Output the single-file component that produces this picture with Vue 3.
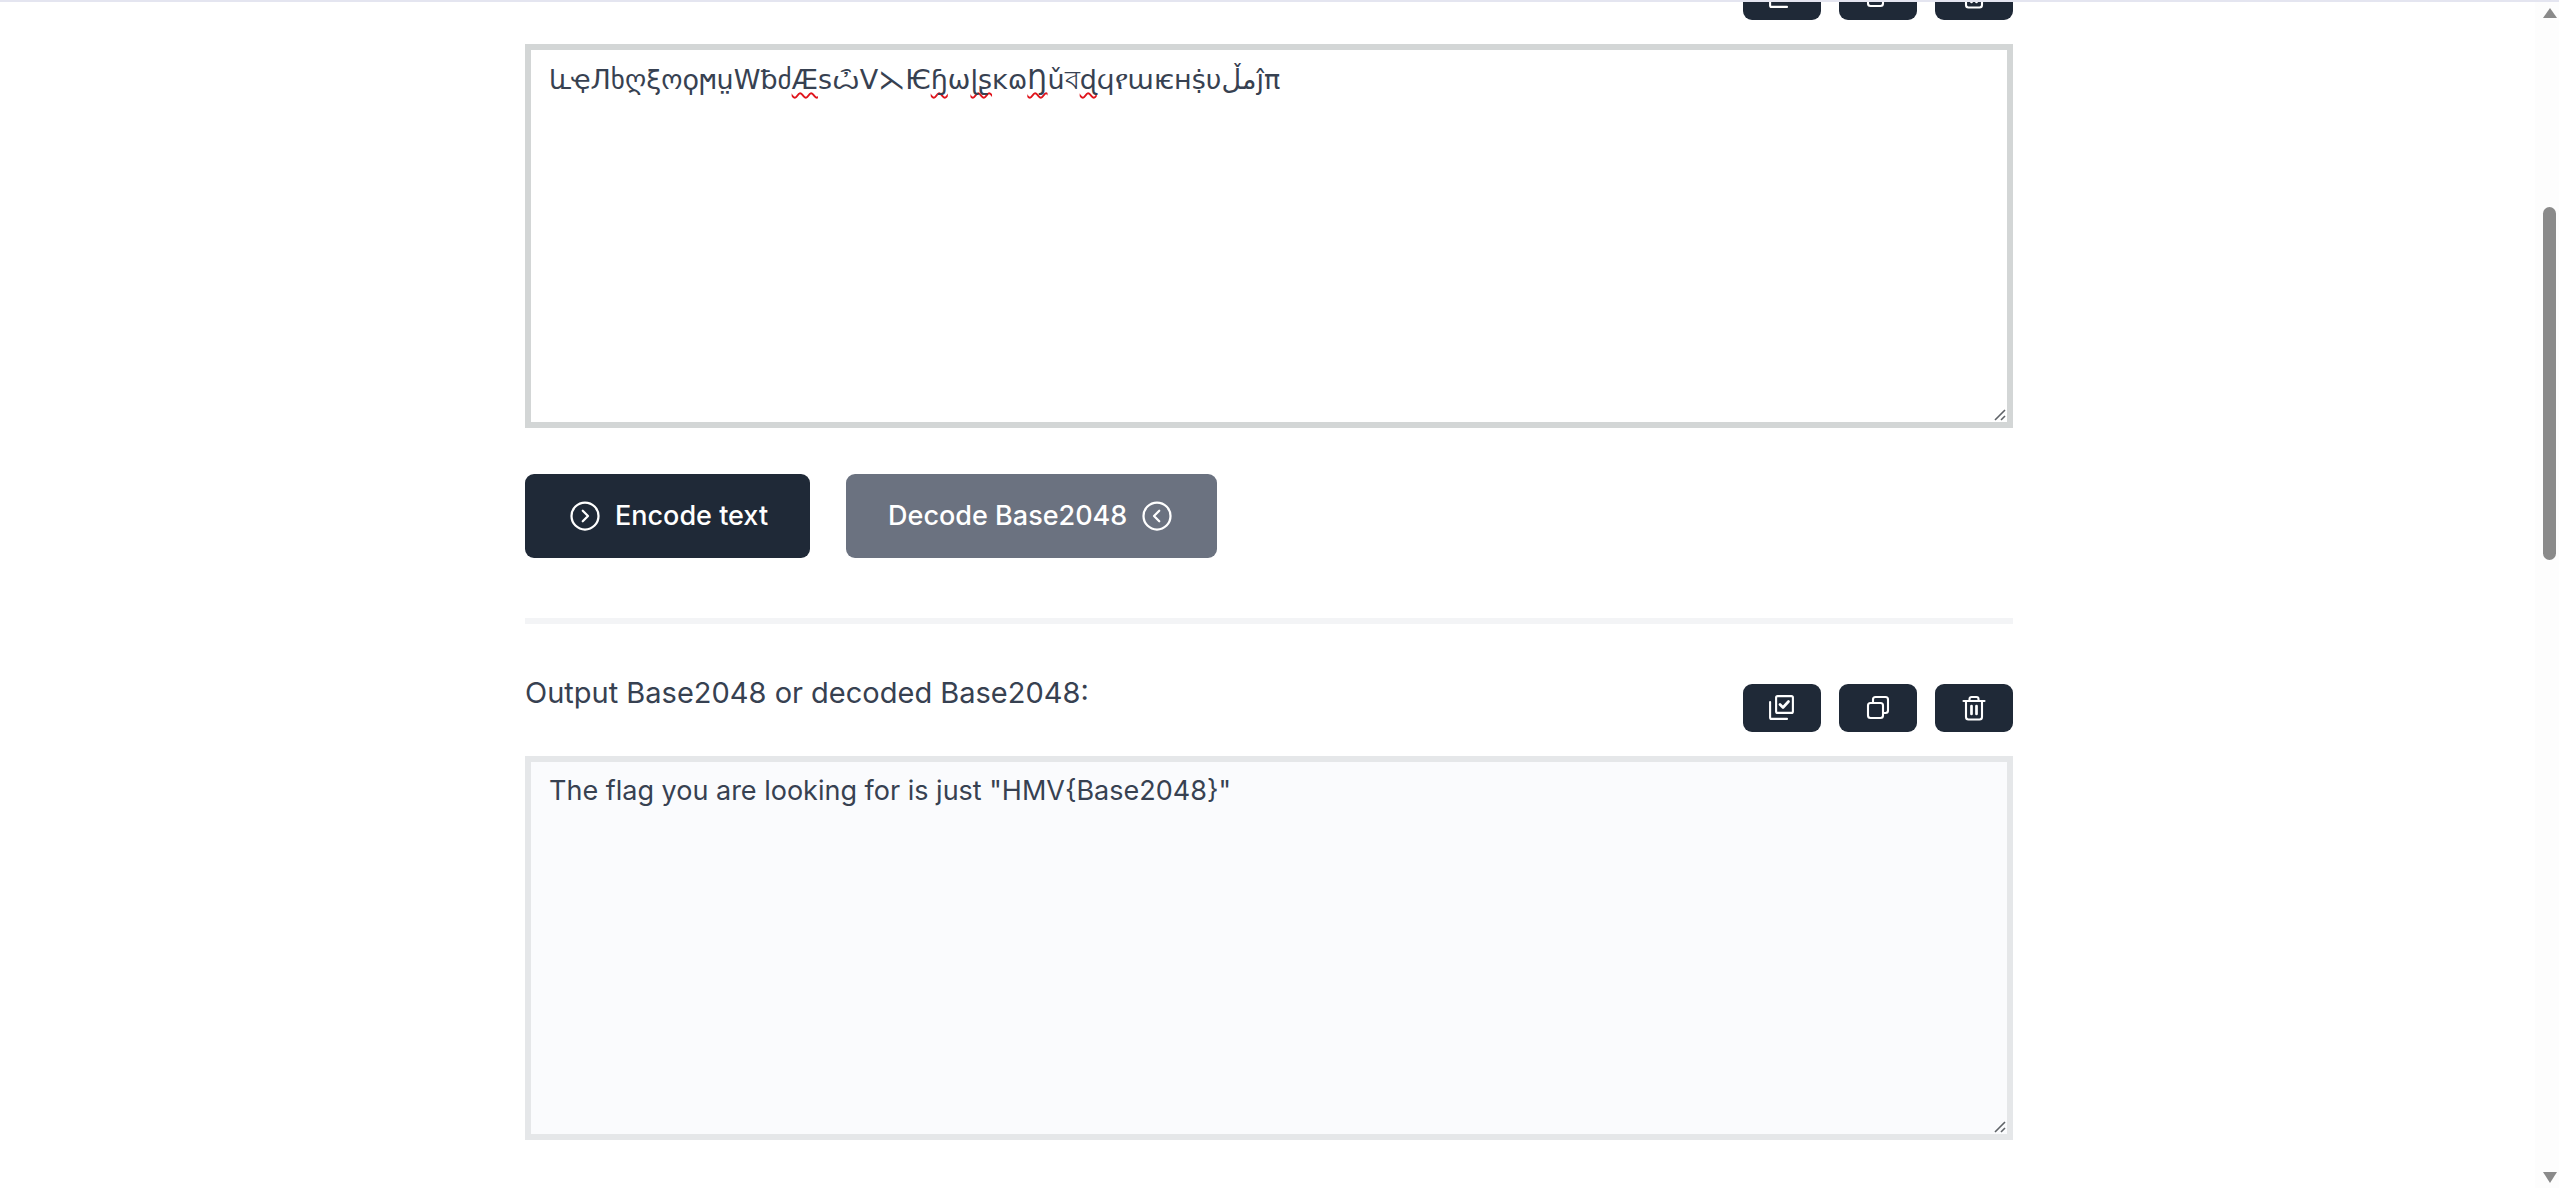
<script setup>
const rows = [0, 1]
const encoded = [
  { t: 'ևҿЛხღξოϙϻṳWƀძ' }, { t: 'Æ', bad: true }, { t: 'sѽV⋋Ѥ' }, { t: 'ɧ', bad: true }, { t: 'ѡ' },
  { t: 'ɭʂ', bad: true }, { t: 'ĸɷ' }, { t: 'Ŋ', bad: true }, { t: 'ǔব' }, { t: 'ɖ', bad: true },
  { t: 'ϥየաѥʜṩυمڵĵπ' }
]
</script>

<template>
  <div class="page">
    <div class="topbar"></div>
    <div class="viewport">
      <main class="content">
        <section v-for="row in rows" :key="row" class="field">
          <div class="head">
            <label v-if="row === 1" class="label">Output Base2048 or decoded Base2048:</label>
            <div class="actions">
              <button class="action" type="button" aria-label="Select">
                <svg viewBox="0 0 30 30" class="ico">
                  <rect x="9.1" y="3.1" width="16.8" height="16.8" rx="1.5" />
                  <path d="M3.1 9V24.4a1.5 1.5 0 0 0 1.5 1.5H20" />
                  <path class="bold" d="M13 11.5l3 3 5.5-6" />
                </svg>
              </button>
              <button class="action" type="button" aria-label="Copy">
                <svg viewBox="0 0 30 30" class="ico">
                  <rect x="5" y="10" width="15" height="15" rx="2.5" />
                  <path d="M10 9.5V6.5A2.5 2.5 0 0 1 12.5 4H22.5A2.5 2.5 0 0 1 25 6.5V17.5A2.5 2.5 0 0 1 22.5 20H20" />
                </svg>
              </button>
              <button class="action" type="button" aria-label="Clear">
                <svg viewBox="0 0 30 30" class="ico">
                  <path d="M4.5 8H25.5" />
                  <path d="M10.5 8V6a2 2 0 0 1 2-2h5a2 2 0 0 1 2 2v2" />
                  <path d="M7 8V24a2.5 2.5 0 0 0 2.5 2.5h11A2.5 2.5 0 0 0 23 24V8" />
                  <path class="bold" d="M12.5 13v8M17.5 13v8" />
                </svg>
              </button>
            </div>
          </div>

          <div v-if="row === 0" class="box input" role="textbox">
            <span class="glyphs"><span v-for="(p, i) in encoded" :key="i" :class="{ bad: p.bad }">{{ p.t }}</span></span>
            <svg class="grip" viewBox="0 0 12 12"><path d="M1 11L11 1M7 11L11 7" /></svg>
          </div>
          <div v-else class="box output" role="textbox">
            The flag you are looking for is just "HMV{Base2048}"
            <svg class="grip" viewBox="0 0 12 12"><path d="M1 11L11 1M7 11L11 7" /></svg>
          </div>

          <template v-if="row === 0">
            <div class="buttons">
              <button class="btn dark" type="button">
                <svg viewBox="0 0 24 24" class="round"><circle cx="12" cy="12" r="9" /><path d="M10.5 8.5L14 12l-3.5 3.5" /></svg>
                Encode text
              </button>
              <button class="btn gray" type="button">
                Decode Base2048
                <svg viewBox="0 0 24 24" class="round"><circle cx="12" cy="12" r="9" /><path d="M13.5 8.5L10 12l3.5 3.5" /></svg>
              </button>
            </div>
            <hr class="divider" />
          </template>
        </section>
      </main>
      <aside class="scrollbar">
        <span class="arrow up"></span>
        <span class="thumb"></span>
        <span class="arrow down"></span>
      </aside>
    </div>
  </div>
</template>

<style scoped>
.page {
  height: 1188px;
  display: flex;
  flex-direction: column;
  overflow: hidden;
  background: #fff;
  font-family: Inter, "Liberation Sans", sans-serif;
  color: #374151;
}
.topbar { height: 2px; background: #e4e5f0; flex: none; }
.viewport { flex: 1; display: flex; overflow: hidden; min-height: 0; }
.content { flex: 1; padding-left: 525px; margin-top: -30px; }
.field { width: 1488px; }
.head { display: flex; align-items: flex-start; justify-content: space-between; }
.label { font-size: 29px; line-height: 40px; font-weight: 400; margin-top: -11px; }
.actions { display: flex; gap: 18px; margin-left: auto; }
.action {
  width: 78px; height: 48px; border: 0; border-radius: 9px; background: #1f2937;
  display: flex; align-items: center; justify-content: center; padding: 0;
}
.ico { width: 30px; height: 30px; fill: none; stroke: #fff; stroke-width: 2.1; stroke-linecap: round; stroke-linejoin: round; }
.ico .bold { stroke-width: 2.7; }
.box {
  position: relative; height: 384px; box-sizing: border-box; margin-top: 24px;
  border: 6px solid #d3d6d6; padding: 12px 18px; font-size: 27px; line-height: 36px;
}
.input { background: #fff; }
.output { background: #fafbfd; border-color: #e5e7e9; padding-top: 11px; }
.glyphs { font-family: "DejaVu Sans", "Noto Sans", "Noto Sans CJK SC", sans-serif; font-size: 27px; }
.bad { text-decoration: underline wavy #e0141c 1.5px; text-underline-offset: 3px; text-decoration-skip-ink: none; }
.grip { position: absolute; right: 1px; bottom: 1px; width: 12px; height: 12px; fill: none; stroke: #5f6368; stroke-width: 1.6; }
.buttons { display: flex; gap: 36px; margin-top: 46px; }
.btn {
  display: flex; align-items: center; gap: 12px; height: 84px; box-sizing: border-box;
  padding: 0 42px 2px; border: 0; border-radius: 9px; color: #fff;
  font-family: inherit; font-size: 27px; font-weight: 500;
}
.dark { background: #1f2937; }
.gray { background: #6b7280; }
.round { width: 36px; height: 36px; margin-top: 2px; fill: none; stroke: #fff; stroke-width: 1.5; stroke-linecap: round; stroke-linejoin: round; }
.divider { height: 6px; border: 0; background: #f3f4f6; margin: 60px 0; }
.scrollbar {
  width: 24px; flex: none; box-sizing: border-box; background: #fdfdfd;
  display: flex; flex-direction: column; align-items: center; padding: 6px 0 5px 5px;
}
.arrow { width: 0; height: 0; border-left: 7.5px solid transparent; border-right: 7.5px solid transparent; }
.up { border-bottom: 10px solid #8a8a8a; }
.down { border-top: 11px solid #8a8a8a; margin-top: auto; }
.thumb { width: 13px; height: 353px; margin-top: 189px; border-radius: 7px; background: #8a8a8a; }
</style>

<style>
body { margin: 0; }
</style>
